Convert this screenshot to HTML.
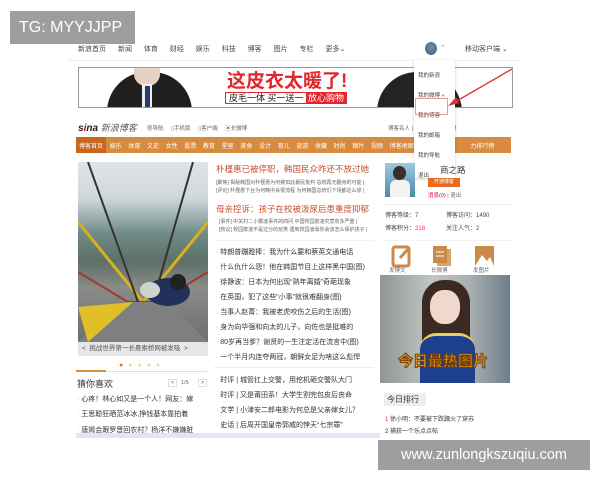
<!DOCTYPE html>
<html><head><meta charset="utf-8"><style>
*{margin:0;padding:0;box-sizing:border-box}
body{width:600px;height:480px;background:#fff;position:relative;overflow:hidden;font-family:"Liberation Sans","Noto Sans CJK SC",sans-serif;color:#333}
.a{position:absolute;white-space:nowrap}
.s{font-size:7px;color:#444}
.xs{font-size:5.5px;color:#666}
.li{font-size:7px;color:#333}
.li:before{content:"· ";color:#999}
</style></head><body>
<div class="a" style="left:10px;top:11px;width:125px;height:33px;background:#9e9e9e;color:#fff;font-size:16px;line-height:33px;padding-left:9px">TG: MYYJJPP</div>

<div class="a" style="left:67px;top:60px;width:455px;height:1px;background:#eee"></div>
<div class="a s" style="left:78px;top:44px;word-spacing:10px">新浪首页 新闻 体育 财经 娱乐 科技 博客 图片 专栏 更多⌄</div>
<div class="a" style="left:425px;top:42px;width:12px;height:13px;border-radius:50%;background:radial-gradient(circle at 50% 40%,#6a8fb5,#3d5d7e)"></div>
<div class="a s" style="left:440px;top:44px;color:#999">⌃</div>
<div class="a s" style="left:465px;top:44px">移动客户端 ⌄</div>

<div class="a" style="left:78px;top:67px;width:435px;height:41px;border:1px solid #999;background:#fff;overflow:hidden">
 <div class="a" style="left:28px;top:4px;width:85px;height:45px;border-radius:40px 40px 0 0;background:#1f1f1f"></div>
 <div class="a" style="left:55px;top:0;width:26px;height:18px;border-radius:0 0 12px 12px;background:#e6d2c2"></div>
 <div class="a" style="left:63px;top:16px;width:10px;height:27px;background:#eee"></div>
 <div class="a" style="left:66px;top:18px;width:5px;height:24px;background:#2a3a6a"></div>
 <div class="a" style="left:298px;top:4px;width:85px;height:45px;border-radius:40px 40px 0 0;background:#232323"></div>
 <div class="a" style="left:148px;top:-2px;font-size:19px;font-weight:bold;color:#e3262d">这皮衣太暖了!</div>
 <div class="a" style="left:146px;top:24px;height:12px;border:1px solid #e3262d;font-size:9px;line-height:10px;padding-left:3px;color:#222">皮毛一体 买一送一 <span style="background:#e3262d;color:#fff;padding:0 2px">放心购物</span></div>
</div>

<div class="a" style="left:78px;top:121px;font-size:10px;font-weight:bold;font-style:italic;color:#222">s<span style="color:#c00">i</span>na <span style="font-weight:normal;font-size:9px;color:#555">新浪博客</span></div>
<div class="a xs" style="left:147px;top:124px;word-spacing:6px">▦导航 ▯手机版 ▯客户端 ▣长微博</div>
<div class="a xs" style="left:388px;top:124px">博客名人 | 明星 | 媒体 | 草根</div>

<div class="a" style="left:76px;top:137px;width:435px;height:16px;background:#d88b3e"></div>
<div class="a" style="left:76px;top:137px;width:30px;height:16px;background:#c8661c"></div>
<div class="a" style="left:79px;top:141px;font-size:6px;color:#fff;word-spacing:5px">博客首页 娱乐 体育 文史 女性 股票 教育 星座 美食 设计 育儿 旅游 收藏 时尚 图片 视频 博客地图 <span style="margin-left:50px">力排行榜</span></div>

<div class="a" style="left:414px;top:60px;width:41px;height:118px;background:#fff;box-shadow:0 1px 3px rgba(0,0,0,.2)"></div>
<div class="a xs" style="left:418px;top:66px;color:#444;line-height:20px">我的新浪<br>我的微博 <span style="color:#f90">●</span><br>我的博客<br>我的邮箱<br>我的导航<br>退出</div>
<div class="a" style="left:415px;top:98px;width:33px;height:17px;border:1px solid #e99"></div>
<svg class="a" style="left:445px;top:66px" width="70" height="44"><line x1="67" y1="3" x2="10" y2="36" stroke="#d33" stroke-width="1.3"/><polygon points="3,40 11,31 14,37" fill="#d33"/></svg>

<div class="a" style="left:78px;top:162px;width:130px;height:180px;overflow:hidden;background:linear-gradient(180deg,#dfe4e6 0%,#cfd8dc 20%,#6f8b88 40%,#5d6f66 55%,#8a8c88 70%,#6c6e70 100%)">
 <svg width="130" height="180"><polyline points="0,60 65,140 130,60" fill="none" stroke="#d7b21c" stroke-width="3"/><polyline points="0,110 50,140 80,140 130,110" fill="none" stroke="#a33" stroke-width="2"/><line x1="10" y1="0" x2="60" y2="140" stroke="#333" stroke-width="2"/><line x1="115" y1="0" x2="75" y2="140" stroke="#333" stroke-width="2"/><polygon points="40,140 90,140 130,180 0,180" fill="#7d7f80"/><polygon points="0,145 55,140 10,180" fill="#e0c027"/><ellipse cx="90" cy="130" rx="22" ry="14" fill="#22305a"/><ellipse cx="72" cy="128" rx="10" ry="8" fill="#cfd3d0"/><circle cx="100" cy="120" r="8" fill="#222"/></svg>
</div>
<div class="a" style="left:78px;top:342px;width:130px;height:14px;background:#e6e6e6;font-size:6.5px;line-height:14px;color:#555;padding-left:4px">&lt;&nbsp; 挑战世界第一长悬索桥网被发吸 &nbsp;&gt;</div>
<div class="a" style="left:119px;top:362px;font-size:7px;color:#e0dbb0;letter-spacing:5px"><span style="color:#d2772b">●</span>●●●●</div>
<div class="a" style="left:76px;top:371px;width:131px;height:1px;background:#ddd"></div>
<div class="a" style="left:76px;top:370px;width:30px;height:2px;background:#d88b3e"></div>
<div class="a" style="left:77px;top:377px;font-size:9px;color:#333">猜你喜欢</div>
<div class="a xs" style="left:168px;top:379px;border:1px solid #ddd;padding:0 2px">&lt;</div>
<div class="a xs" style="left:181px;top:380px">1/5</div>
<div class="a xs" style="left:198px;top:379px;border:1px solid #ddd;padding:0 2px">&gt;</div>
<div class="a li" style="left:77px;top:394px">心疼！林心如又是一个人！网友：嫁</div>
<div class="a li" style="left:77px;top:409px">王思聪狂晒范冰冰,挣钱基本靠拍着</div>
<div class="a li" style="left:77px;top:425px">唐嫣会跟罗晋回农村？杨洋不嫌嫌脏</div>

<div class="a" style="left:216px;top:163px;font-size:8.5px;color:#c4502f">朴槿惠已被停职，韩国民众咋还不放过她</div>
<div class="a xs" style="left:216px;top:179px;line-height:8px;font-size:5px">[聚焦] 揭秘韩国对朴槿惠为何被如此暴民批判 总统再无翻身的可能 |<br>[评论] 朴槿惠下台为何韩中会很流程 为何韩国总统们下场都这么惨 |</div>
<div class="a" style="left:216px;top:203px;font-size:8.5px;color:#c4502f">母亲控诉：孩子在校被泼尿后患重度抑郁</div>
<div class="a xs" style="left:219px;top:218px;line-height:8px;font-size:5px">[事件] 中关村二小霸凌事件的四问 中国校园欺凌究竟有多严重 |<br>[热议] 校园欺凌不是过分的玩笑 遇到校园凌辱你会该怎么保护孩子 |</div>
<div class="a" style="left:214px;top:240px;width:160px;height:1px;background:#f0f0f0"></div>
<div class="a" style="left:216px;top:245px;line-height:15px">
<div class="li">特朗普蹦蹬捧：我为什么要和蔡英文通电话</div>
<div class="li">什么仇什么怨！他在韩国节目上这样黑中国(图)</div>
<div class="li">徐静波：日本为何出现“熟年离婚”奇葩现象</div>
<div class="li">在英国，犯了这些“小事”就很难翻身(图)</div>
<div class="li">当事人赵菁：我被老虎咬伤之后的生活(图)</div>
<div class="li">身为向华强和向太的儿子，向佐也是挺难的</div>
<div class="li">80岁再当爹？谢贤的一生注定活在流言中(图)</div>
<div class="li">一个半月内连夺两冠，朝鲜女足为啥这么彪悍</div>
</div>
<div class="a" style="left:214px;top:367px;width:160px;height:1px;background:#eee"></div>
<div class="a" style="left:216px;top:373px;line-height:15px">
<div class="li">时评 | 城管扛上交警，用挖机砸交警队大门</div>
<div class="li">时评 | 又是莆田系！大学生割完包皮后丧命</div>
<div class="li">文学 | 小津安二郎电影为何总是父亲嫁女儿？</div>
<div class="li">史话 | 后周开国皇帝郭威的悖天“七宗罪”</div>
</div>

<div class="a" style="left:385px;top:163px;width:30px;height:34px;background:linear-gradient(180deg,#9cc9e0,#4d88a8);"></div>
<div class="a" style="left:393px;top:166px;width:13px;height:14px;border-radius:50%;background:#3a2f28"></div>
<div class="a" style="left:390px;top:180px;width:20px;height:17px;background:#f2f2ee;border-radius:6px 6px 0 0"></div>
<div class="a" style="left:440px;top:164px;font-size:8.5px;color:#333">商之路</div>
<div class="a" style="left:428px;top:178px;width:32px;height:9px;background:#ea6a20;font-size:5px;color:#fff;text-align:center;line-height:9px">开通博客</div>
<div class="a xs" style="left:428px;top:191px"><span style="color:#d03">消息(0)</span> | 退出</div>
<div class="a" style="left:382px;top:204px;width:130px;height:1px;background:#eee"></div>
<div class="a" style="left:385px;top:210px;font-size:6px;color:#444;line-height:13px">博客等级：7<br>博客积分：<span style="color:#e35">218</span></div>
<div class="a" style="left:446px;top:210px;font-size:6px;color:#444;line-height:13px">博客访问：1490<br>关注人气：2</div>
<div class="a" style="left:382px;top:240px;width:130px;height:1px;background:#f3f3f3"></div>
<svg class="a" style="left:390px;top:244px" width="120" height="24">
<rect x="3" y="3" width="16" height="19" rx="2" fill="none" stroke="#c98a4a" stroke-width="3"/><line x1="10" y1="14" x2="19" y2="4" stroke="#c98a4a" stroke-width="3"/>
<rect x="47" y="5" width="14" height="17" fill="#d9a36a"/><rect x="43" y="2" width="14" height="17" fill="#c98a4a"/><line x1="46" y1="8" x2="54" y2="8" stroke="#fff"/><line x1="46" y1="12" x2="54" y2="12" stroke="#fff"/>
<rect x="85" y="2" width="19" height="20" fill="#c98a4a"/><polygon points="85,22 92,11 97,17 100,13 104,22" fill="#fff"/></svg>
<div class="a xs" style="left:389px;top:266px;word-spacing:24px">发博文 长微博 发图片</div>
<div class="a" style="left:380px;top:275px;width:130px;height:108px;overflow:hidden;background:linear-gradient(90deg,#8d9695,#c2c6c2 40%,#a8aeb0 70%,#6d7f8a)">
 <div class="a" style="left:42px;top:5px;width:48px;height:80px;border-radius:22px 22px 6px 6px;background:#3b2a22"></div>
 <div class="a" style="left:50px;top:15px;width:30px;height:34px;border-radius:45%;background:#f0d8cc"></div>
 <div class="a" style="left:40px;top:58px;width:55px;height:50px;border-radius:16px 16px 0 0;background:#1e3f8e;border-top:3px solid #e9d05a"></div>
 <div class="a" style="left:18px;top:75px;font-size:15px;font-weight:bold;color:#f4a11c;-webkit-text-stroke:1px #7a3d00">今日最热图片</div>
</div>
<div class="a" style="left:384px;top:393px;width:42px;height:13px;background:#eee;font-size:8px;line-height:13px;padding-left:3px">今日排行</div>
<div class="a xs" style="left:385px;top:414px;font-size:6px;line-height:12px;color:#333"><span style="color:#d33">1</span> 徐小明：不要被下跌蹿火了穿苏<br>2 捕获一个乐点点帖</div>

<div class="a" style="left:76px;top:433px;width:304px;height:5px;background:#dfe7f2"></div>
<div class="a" style="left:378px;top:440px;width:212px;height:30px;background:#9e9e9e;color:#fff;font-size:14.5px;line-height:30px;text-align:center">www.zunlongkszuqiu.com</div>
</body></html>
